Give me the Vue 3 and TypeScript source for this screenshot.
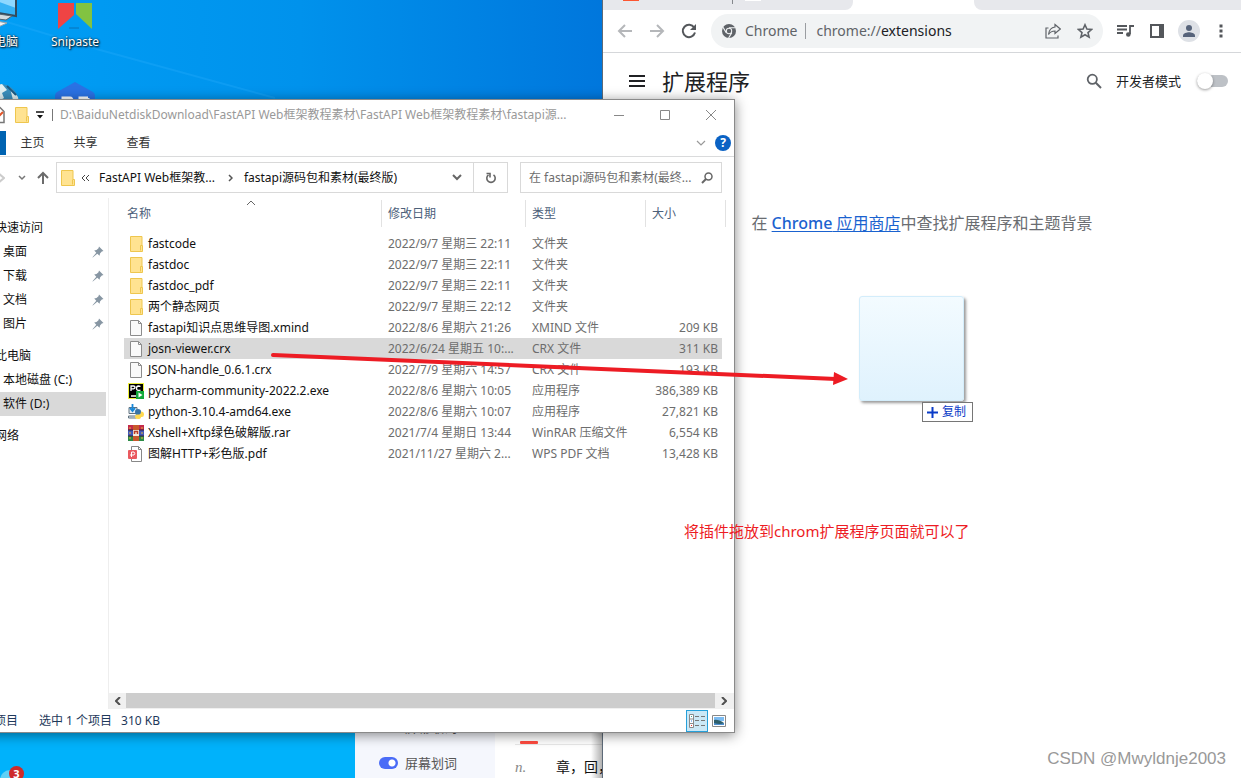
<script setup lang="ts">
import { ref } from 'vue'

type Kind = 'folder' | 'file' | 'pycharm' | 'python' | 'rar' | 'pdf'
interface Entry {
  name: string
  date: string
  type: string
  size: string
  kind: Kind
}

const entries: Entry[] = [
  { name: 'fastcode', date: '2022/9/7 星期三 22:11', type: '文件夹', size: '', kind: 'folder' },
  { name: 'fastdoc', date: '2022/9/7 星期三 22:11', type: '文件夹', size: '', kind: 'folder' },
  { name: 'fastdoc_pdf', date: '2022/9/7 星期三 22:11', type: '文件夹', size: '', kind: 'folder' },
  { name: '两个静态网页', date: '2022/9/7 星期三 22:12', type: '文件夹', size: '', kind: 'folder' },
  { name: 'fastapi知识点思维导图.xmind', date: '2022/8/6 星期六 21:26', type: 'XMIND 文件', size: '209 KB', kind: 'file' },
  { name: 'josn-viewer.crx', date: '2022/6/24 星期五 10:...', type: 'CRX 文件', size: '311 KB', kind: 'file' },
  { name: 'JSON-handle_0.6.1.crx', date: '2022/7/9 星期六 14:57', type: 'CRX 文件', size: '193 KB', kind: 'file' },
  { name: 'pycharm-community-2022.2.exe', date: '2022/8/6 星期六 10:05', type: '应用程序', size: '386,389 KB', kind: 'pycharm' },
  { name: 'python-3.10.4-amd64.exe', date: '2022/8/6 星期六 10:07', type: '应用程序', size: '27,821 KB', kind: 'python' },
  { name: 'Xshell+Xftp绿色破解版.rar', date: '2021/7/4 星期日 13:44', type: 'WinRAR 压缩文件', size: '6,554 KB', kind: 'rar' },
  { name: '图解HTTP+彩色版.pdf', date: '2021/11/27 星期六 2...', type: 'WPS PDF 文档', size: '13,428 KB', kind: 'pdf' },
]
const selected = ref('josn-viewer.crx')

interface NavItem { label: string; pinned?: boolean; active?: boolean }
interface NavGroup { title: string; items: NavItem[] }
const groups: NavGroup[] = [
  {
    title: '快速访问',
    items: [
      { label: '桌面', pinned: true },
      { label: '下载', pinned: true },
      { label: '文档', pinned: true },
      { label: '图片', pinned: true },
    ],
  },
  { title: '此电脑', items: [{ label: '本地磁盘 (C:)' }, { label: '软件 (D:)', active: true }] },
  { title: '网络', items: [] },
]
const tabs = ['主页', '共享', '查看']
const devMode = ref(false)
const wordPick = ref(true)
const filter = ref('')
</script>

<template>
  <main class="desktop">
    <svg class="wall" viewBox="0 0 603 100" preserveAspectRatio="none" aria-hidden="true">
      <path d="M0 20 L100 50 L275 98" fill="none" stroke="#35b4ff" stroke-opacity=".25" stroke-width="2" />
    </svg>
    <div class="icon pc">
      <svg width="64" height="32" viewBox="0 0 64 32" aria-hidden="true">
        <path d="M22 0 H62 V16 L22 9Z" fill="#35b3f5" />
        <path d="M40 0 L62 8 V0Z" fill="#8cd8ff" />
        <path d="M22 9 L62 16 V0" fill="none" stroke="#334a5c" stroke-width="2" />
        <path d="M38 13 L58 16 L52 20 L36 18Z" fill="#d5dce0" stroke="#56636b" />
        <path d="M26 18 L53 23 L42 28 L20 26Z" fill="#eef1f3" stroke="#9aa5ab" />
      </svg>
      <span>此电脑</span>
    </div>
    <div class="icon snip">
      <svg width="36" height="32" viewBox="0 0 36 32" aria-hidden="true">
        <path d="M1 3H17V15L1 29Z" fill="#ef4444" />
        <path d="M19 3H35V29L19 14Z" fill="#82c341" />
        <path d="M12 28h10" stroke="#0872b8" />
      </svg>
      <span>Snipaste</span>
    </div>
    <svg class="globe" width="40" height="40" viewBox="0 0 40 40" aria-hidden="true">
      <circle cx="20" cy="20" r="19" fill="#3b8fbd" />
      <path d="M9 4 L22 1 L27 7 L22 10 L24 15 L15 20 L10 12Z M30 5 L38 14 L39 22 L33 17Z" fill="#e3f2f4" />
      <path d="M27 3 L36 12" stroke="#1d5b83" stroke-width="2" />
    </svg>
    <svg class="hex" width="40" height="40" viewBox="0 0 40 40" aria-hidden="true">
      <path d="M20 0 L38 10 Q40 11 40 14 V40 H0 V14 Q0 11 2 10Z" fill="#2a72e4" />
      <path d="M8 24 V16 H15 Q17 16 17 19 V24 M33 16 H25 V18 M33 16 V19 L29 22" fill="none" stroke="#fff" stroke-width="3" />
    </svg>
    <div class="tray">
      <span class="bubble"></span><span class="count">3</span>
    </div>

    <section class="dict">
      <div class="dict-side">
        <div class="cut"><i></i>屏幕取词</div>
        <label class="pick"><input v-model="wordPick" type="checkbox" />屏幕划词</label>
      </div>
      <div class="dict-main">
        <div class="rule"><i></i></div>
        <p><em>n.</em><span>章，回，</span></p>
      </div>
    </section>

    <section class="chrome">
      <div class="strip">
        <div class="inactive"><i class="fav"></i><i class="sep"></i><i class="fav2"></i></div>
        <div class="current"></div>
        <div class="rest"></div>
      </div>
      <div class="toolbar">
        <button class="tool" aria-label="后退"><svg width="16" height="16" viewBox="0 0 16 16"><path d="M15 8H2M8 2L2 8l6 6" fill="none" stroke="#b5b7ba" stroke-width="2" /></svg></button>
        <button class="tool" aria-label="前进"><svg width="16" height="16" viewBox="0 0 16 16"><path d="M1 8h13M8 2l6 6-6 6" fill="none" stroke="#b5b7ba" stroke-width="2" /></svg></button>
        <button class="tool" aria-label="重新加载"><svg width="16" height="16" viewBox="0 0 16 16"><path d="M13.200 4.500A6.200 6.200 0 1 0 14 9.600" fill="none" stroke="#54575b" stroke-width="2" /><path d="M15 1v6H9Z" fill="#54575b" /></svg></button>
        <div class="omni">
          <svg width="14" height="14" viewBox="0 0 14 14" aria-hidden="true"><circle cx="7" cy="7" r="7" fill="#5f6368" /><circle cx="7" cy="7" r="3.200" fill="#f1f3f4" /><circle cx="7" cy="7" r="2.200" fill="#5f6368" /><path d="M7 3.800H13.500M4.200 8.600L1 3.200M9.800 8.600L6.600 14" stroke="#f1f3f4" stroke-width="1.100" /></svg>
          <span class="site">Chrome</span><i></i>
          <span class="url">chrome://<b>extensions</b></span>
          <button class="tool" aria-label="分享"><svg width="16" height="16" viewBox="0 0 16 16"><path d="M3.500 5H1v10h12v-2.500" fill="none" stroke="#5f6368" stroke-width="1.200" /><path d="M10 1.500L15.300 6L10 10.500V8C7 8 5 9 3.500 11.500C4 7 6.500 4.500 10 4Z" fill="none" stroke="#5f6368" stroke-width="1.200" /></svg></button>
          <button class="tool" aria-label="收藏"><svg width="16" height="16" viewBox="0 0 16 16"><path d="M8 1.800l1.900 4.300 4.600.4-3.500 3.100 1.100 4.600L8 11.800l-4.100 2.400L5 9.600 1.500 6.500l4.600-.4Z" fill="none" stroke="#5f6368" stroke-width="1.600" /></svg></button>
        </div>
        <button class="tool" aria-label="媒体"><svg width="18" height="16" viewBox="0 0 18 16"><path d="M1 3h10M1 6.500h10M1 10h6M14 11V3h4" fill="none" stroke="#54575b" stroke-width="1.800" /><circle cx="12.300" cy="11.500" r="2.300" fill="#54575b" /></svg></button>
        <button class="tool" aria-label="侧边栏"><svg width="14" height="14" viewBox="0 0 14 14"><path d="M1 1h12v12H1Z" fill="#fff" stroke="#54575b" stroke-width="2" /><path d="M9 1h4v12H9Z" fill="#54575b" /></svg></button>
        <button class="tool" aria-label="个人资料"><svg width="22" height="22" viewBox="0 0 22 22"><circle cx="11" cy="11" r="11" fill="#dee1e6" /><circle cx="11" cy="8" r="3" fill="#56637a" /><path d="M5 17v-1.500C5 13 9 12.200 11 12.200S17 13 17 15.500V17Z" fill="#56637a" /></svg></button>
        <button class="tool" aria-label="更多"><svg width="4" height="14" viewBox="0 0 4 14"><path d="M.5.500h3v3h-3ZM.5 5.500h3v3h-3ZM.5 10.500h3v3h-3Z" fill="#54575b" /></svg></button>
      </div>
      <header class="ext-head">
        <button class="tool" aria-label="主菜单"><svg width="16" height="12" viewBox="0 0 16 12"><path d="M0 1h16M0 6h16M0 11h16" stroke="#202124" stroke-width="2" /></svg></button>
        <h1>扩展程序</h1>
        <button class="tool" aria-label="搜索"><svg width="16" height="16" viewBox="0 0 16 16"><circle cx="6.300" cy="6.300" r="4.600" fill="none" stroke="#5f6368" stroke-width="1.800" /><path d="M9.800 9.800L15 15" stroke="#5f6368" stroke-width="2" /></svg></button>
        <label class="dev">开发者模式<input v-model="devMode" type="checkbox" /></label>
      </header>
      <p class="store">在 <a href="#"><b>Chrome</b> 应用商店</a>中查找扩展程序和主题背景</p>
    </section>

    <section class="explorer">
      <header class="title">
        <svg class="doc" width="14" height="18" viewBox="0 0 14 18" aria-hidden="true"><path d="M1 1.500h8l4 4V16.500H1Z" fill="#fff" stroke="#777" stroke-width="1.500" /><path d="M3 9l3 3 6-6" fill="none" stroke="#e2562b" stroke-width="2" /></svg>
        <svg width="14" height="16" viewBox="0 0 14 16" aria-hidden="true"><path d="M.5.500h11.500v9h1.500v6H.5Z" fill="#ffe391" stroke="#eec64e" /><path d="M11.500 9.500v5" stroke="#eec64e" /></svg>
        <svg class="drop" width="8" height="8" viewBox="0 0 8 8" aria-hidden="true"><path d="M0 1h8" stroke="#111" stroke-width="1.500" /><path d="M1 4h6L4 7.500Z" fill="#111" /></svg>
        <i></i>
        <h2>D:\BaiduNetdiskDownload\FastAPI Web框架教程素材\FastAPI Web框架教程素材\fastapi源...</h2>
        <button aria-label="最小化"><svg width="12" height="12" viewBox="0 0 12 12"><path d="M1 6.500h10" stroke="#888" /></svg></button>
        <button aria-label="最大化"><svg width="12" height="12" viewBox="0 0 12 12"><path d="M1.500 1.500h9v9h-9Z" fill="none" stroke="#888" /></svg></button>
        <button aria-label="关闭"><svg width="12" height="12" viewBox="0 0 12 12"><path d="M1 1l10 10M11 1L1 11" stroke="#888" /></svg></button>
      </header>
      <nav class="ribbon">
        <button class="file" aria-label="文件"></button>
        <button v-for="t in tabs" :key="t">{{ t }}</button>
        <span class="grow"></span>
        <svg width="10" height="6" viewBox="0 0 10 6" aria-hidden="true"><path d="M1 1l4 4 4-4" fill="none" stroke="#999" stroke-width="1.200" /></svg>
        <button class="help" aria-label="帮助">?</button>
      </nav>
      <div class="address">
        <svg class="fwd" width="8" height="12" viewBox="0 0 8 12" aria-hidden="true"><path d="M1 1l6 5-6 5" fill="none" stroke="#ccc" stroke-width="2" /></svg>
        <svg class="hist" width="8" height="6" viewBox="0 0 8 6" aria-hidden="true"><path d="M1 1l3 3 3-3" fill="none" stroke="#777" stroke-width="1.500" /></svg>
        <svg class="up" width="12" height="14" viewBox="0 0 12 14" aria-hidden="true"><path d="M6 13V2M1 7l5-5 5 5" fill="none" stroke="#6b6b6b" stroke-width="2" /></svg>
        <div class="path">
          <svg width="14" height="16" viewBox="0 0 14 16" aria-hidden="true"><path d="M.5.500h11.500v9h1.500v6H.5Z" fill="#ffe391" stroke="#eec64e" /><path d="M11.500 9.500v5" stroke="#eec64e" /></svg>
          <svg class="more" width="9" height="8" viewBox="0 0 9 8" aria-hidden="true"><path d="M4 1L1 4l3 3M8 1L5 4l3 3" fill="none" stroke="#444" /></svg>
          <button>FastAPI Web框架教...</button>
          <svg class="next" width="5" height="8" viewBox="0 0 5 8" aria-hidden="true"><path d="M1 1l3 3-3 3" fill="none" stroke="#555" stroke-width="1.500" /></svg>
          <button>fastapi源码包和素材(最终版)</button>
          <span class="grow"></span>
          <svg width="10" height="7" viewBox="0 0 10 7" aria-hidden="true"><path d="M1 1l4 4 4-4" fill="none" stroke="#666" stroke-width="2" /></svg>
          <button class="refresh" aria-label="刷新"><svg width="12" height="12" viewBox="0 0 12 12"><path d="M8.500 2.800A4.200 4.200 0 1 1 3.500 2.800" fill="none" stroke="#666" stroke-width="1.600" /><path d="M1.500 1.500H5V5.500" fill="none" stroke="#666" stroke-width="1.600" /></svg></button>
        </div>
        <div class="search">
          <input v-model="filter" type="text" aria-label="搜索" placeholder="在 fastapi源码包和素材(最终..." />
          <svg width="12" height="12" viewBox="0 0 12 12" aria-hidden="true"><circle cx="7.500" cy="4.500" r="3.500" fill="none" stroke="#666" stroke-width="1.500" /><path d="M5 7L1 11" stroke="#666" stroke-width="2" /></svg>
        </div>
      </div>
      <div class="body">
        <aside>
          <div v-for="g in groups" :key="g.title" class="group">
            <div class="nav head">{{ g.title }}</div>
            <div v-for="n in g.items" :key="n.label" class="nav" :class="{ active: n.active }">
              <span>{{ n.label }}</span>
              <svg v-if="n.pinned" width="12" height="12" viewBox="0 0 12 12" aria-hidden="true"><path d="M7 .5L11.500 5L9.800 5.500L8 7.500L7.600 9.800L5.300 7.700L.8 11.500L.5 11.200L4.300 6.700L2.200 4.400L4.500 4L6.500 2.200Z" fill="#8796a3" /></svg>
            </div>
          </div>
        </aside>
        <div class="list">
          <table>
            <colgroup><col class="c1" /><col class="c2" /><col class="c3" /><col class="c4" /></colgroup>
            <thead>
              <tr>
                <th>名称<svg width="10" height="6" viewBox="0 0 10 6" aria-hidden="true"><path d="M1 5l4-4 4 4" fill="none" stroke="#666" /></svg></th>
                <th>修改日期</th><th>类型</th><th>大小</th>
              </tr>
            </thead>
            <tbody>
              <tr v-for="e in entries" :key="e.name" :class="{ sel: e.name === selected }" @click="selected = e.name">
                <td>
                  <div class="name">
                    <svg width="16" height="16" viewBox="0 0 16 16" aria-hidden="true">
                      <template v-if="e.kind === 'folder'"><path d="M2.500.500H14v9h.5v6h-12Z" fill="#ffe391" stroke="#eec64e" /><path d="M12.500 14.500v-5H14" fill="none" stroke="#eec64e" /></template>
                      <template v-else-if="e.kind === 'file'"><path d="M2.500.500h8l3 3v12h-11Z" fill="#fafafa" stroke="#8c8c8c" /><path d="M10.500.500v3h3" fill="none" stroke="#8c8c8c" /></template>
                      <template v-else-if="e.kind === 'pycharm'"><path d="M0 0h16v16H0Z" fill="#eef03a" /><path d="M1 1h14v14H1Z" fill="#000" /><path d="M3 8V3h2.500q1.500 0 1.500 1.300T5.500 5.800H3M12.500 3.500Q11.500 3 10.500 3 8.500 3.200 8.500 5.300T10.500 7.500q1 0 2-.5M3 13h5" fill="none" stroke="#fff" stroke-width="1.300" /><path d="M8 8h8v8H8Z" fill="#13a93b" /><path d="M10.500 9.500v5l4-2.500Z" fill="#fff" /></template>
                      <template v-else-if="e.kind === 'python'"><path d="M1 3.500h8v6H1ZM.5 12h8v2h-8Z" fill="#e4edf3" stroke="#60727f" /><path d="M4.500 0v6M2 4l2.500 3L7 4" fill="none" stroke="#1687d9" stroke-width="1.800" /><path d="M7 7.500Q7 5 10 5t3 2.500V9q0 2-2 2H9q-2 0-2-3.500Z" fill="#3a75a8" /><path d="M13 7.500q3 0 3 3t-3 2.500q0 2-3 2t-3-2.500Q7 10.500 9 10.500h2.500Q13 10 13 7.500Z" fill="#ffd94f" /></template>
                      <template v-else-if="e.kind === 'rar'"><path d="M0 0h16v5H0Z" fill="#c32a4a" /><path d="M0 5h16v6H0Z" fill="#4257b5" /><path d="M0 11h16v5H0Z" fill="#2d8b46" /><path d="M0 5h16M0 11h16" stroke="#33203a" /><path d="M5 0h6v16H5Z" fill="#c8582c" /><path d="M5 5h6v6H5Z" fill="#f4ead8" /><path d="M6.500 9V6.500h3V9" fill="none" stroke="#bb3d26" stroke-width="1.500" /><path d="M2 2v12M14 2v12" stroke="#e8b83d" stroke-dasharray="2 3" /></template>
                      <template v-else><path d="M3.500.500h7l3 3v12h-10Z" fill="#fff" stroke="#888" /><path d="M10.500.500v3h3" fill="none" stroke="#888" /><rect y="4" width="9" height="9" rx="1" fill="#ea5a5f" /><path d="M3.500 11V6H6q1.500 1.500 0 3H2" fill="none" stroke="#fff" /></template>
                    </svg>
                    <span>{{ e.name }}</span>
                  </div>
                </td>
                <td>{{ e.date }}</td><td>{{ e.type }}</td><td>{{ e.size }}</td>
              </tr>
            </tbody>
          </table>
          <div class="hscroll">
            <button aria-label="向左滚动"><svg width="6" height="8" viewBox="0 0 6 8"><path d="M5 0L1 4l4 4" fill="none" stroke="#505050" stroke-width="2" /></svg></button>
            <div class="thumb"></div>
            <button aria-label="向右滚动"><svg width="6" height="8" viewBox="0 0 6 8"><path d="M1 0l4 4-4 4" fill="none" stroke="#505050" stroke-width="2" /></svg></button>
          </div>
        </div>
      </div>
      <footer>
        <span class="total">11 个项目</span>
        <span class="chosen">选中 1 个项目</span><span class="bytes">310 KB</span>
        <span class="grow"></span>
        <button class="view on" aria-label="详细信息"><svg width="16" height="14" viewBox="0 0 16 14"><path d="M.5.500h4v13h-4ZM.5 5h4M.5 9.500h4" fill="#fff" stroke="#8a8a8a" /><path d="M6 2.500h4M12 2.500h4M6 6.500h4M12 6.500h4M6 11.500h4M12 11.500h4" stroke="#777" /><path d="M2 2.500h1" stroke="#3a9" /><path d="M2 7h1" stroke="#38e" /><path d="M2 11.500h1" stroke="#e33" /></svg></button>
        <button class="view" aria-label="大图标"><svg width="14" height="12" viewBox="0 0 14 12"><path d="M.5.500h13v11H.5Z" fill="#fff" stroke="#888" /><path d="M2 2h10v4H2Z" fill="#7cbcf2" /><path d="M2 5q4-1 10 3v2H2Z" fill="#2e5f6b" /><path d="M2 8q6 2 10 0v2H2Z" fill="#4e8fd0" /></svg></button>
      </footer>
    </section>

    <div class="ghost"></div>
    <div class="tip"><svg width="11" height="11" viewBox="0 0 11 11" aria-hidden="true"><path d="M5.500 0v11M0 5.500h11" stroke="#0a3cc8" stroke-width="2" /></svg>复制</div>
    <svg class="arrow" width="580" height="36" viewBox="0 0 580 36" aria-hidden="true">
      <path d="M2 5L565 29" stroke="#ed1c24" stroke-width="4" stroke-linecap="round" />
      <path d="M563 22L577 29L562 35Z" fill="#ed1c24" />
    </svg>
    <p class="note">将插件拖放到chrom扩展程序页面就可以了</p>
    <p class="mark">CSDN @Mwyldnje2003</p>
  </main>
</template>

<style>
body { margin: 0; overflow: hidden; }
</style>

<style scoped>
* { box-sizing: border-box; }
p, h1, h2 { margin: 0; font-weight: 400; }
button { border: 0; padding: 0; background: none; font: inherit; color: inherit; display: flex; align-items: center; justify-content: center; flex-shrink: 0; white-space: nowrap; }
svg { flex-shrink: 0; }
.grow { flex: 1; }
.desktop { position: relative; height: 100vh; overflow: hidden; background: linear-gradient(to bottom, transparent 0, transparent 100px, #00b2fb 700px), linear-gradient(to right, #009ef5 0, #0092ec 300px, #0076dc 610px); font: 12px/16px "Noto Sans", "Noto Sans CJK SC", sans-serif; color: #111; }
.wall { position: absolute; left: 0; top: 0; width: 603px; height: 100px; }
.icon { position: absolute; top: 0; display: flex; flex-direction: column; align-items: center; gap: 2px; color: #fff; text-shadow: 1px 1px 2px #000, 0 0 2px #023; white-space: nowrap; }
.pc { left: -42px; width: 64px; align-items: flex-end; padding-right: 4px; }
.snip { left: 45px; width: 60px; }
.globe { position: absolute; left: -20px; top: 83px; }
.hex { position: absolute; left: 55px; top: 82px; }
.tray { position: absolute; left: 0; bottom: -4px; display: flex; align-items: flex-end; }
.bubble { width: 16px; height: 12px; border-radius: 10px 4px 0 0; background: #5fd0f5; }
.count { width: 15px; height: 15px; margin-left: -7px; margin-bottom: 1px; border-radius: 8px; background: #cf2a2a; color: #fff; font-weight: 700; font-size: 11px; line-height: 15px; text-align: center; }

.dict { position: absolute; left: 355px; bottom: 0; width: 248px; height: 62px; display: flex; background: #fff; }
.dict::after { content: ""; position: absolute; inset: 0 0 0 auto; width: 12px; background: linear-gradient(to right, transparent, #0005); }
.dict-side { width: 140px; padding: 2px 0 0 24px; background: #f5f7fd; color: #555; font-size: 13px; display: flex; flex-direction: column; gap: 18px; line-height: 18px; }
.cut { display: flex; align-items: center; gap: 7px; }
.cut i { width: 19px; height: 12px; border-radius: 6px; background: #b9bdc8; }
.pick { display: flex; align-items: center; gap: 7px; }
.pick input { appearance: none; margin: 0; width: 19px; height: 12px; border-radius: 6px; background: radial-gradient(circle at 13px 6px, #fff 3px, #4a6cf7 4px); }
.dict-main { flex: 1; min-width: 0; padding: 25px 0 0 20px; overflow: hidden; }
.rule { border-bottom: 1px solid #e8e8e8; height: 4px; }
.rule i { display: block; width: 18px; height: 3px; margin-left: 5px; border-radius: 1px; background: #ff4a3f; }
.dict-main p { display: flex; margin-top: 12px; font-size: 14px; line-height: 20px; white-space: nowrap; }
.dict-main em { width: 41px; flex-shrink: 0; color: #888; font-family: "Liberation Serif", serif; font-size: 15px; }

.chrome { position: absolute; inset: 0 0 0 602px; background: #fff; border-left: 1px solid #5d6a78; font-size: 14px; }
.strip { display: flex; height: 10px; background: #fff; }
.inactive { width: 250px; display: flex; background: #e7e8ec; border-radius: 0 0 8px 0; }
.fav { width: 16px; height: 1px; margin-left: 20px; background: #fc5531; }
.sep { width: 1px; height: 4px; margin-left: 93px; background: #85888c; }
.fav2 { width: 16px; height: 1px; margin-left: 12px; background: #fff; }
.current { width: 121px; }
.rest { flex: 1; background: #e7e8ec; border-radius: 0 0 0 8px; }
.toolbar { display: flex; align-items: center; height: 43px; padding: 0 4px 0 6px; border-bottom: 1px solid #d5d7da; }
.tool { width: 32px; height: 32px; }
.omni { flex: 1; display: flex; align-items: center; height: 34px; margin: 0 6px; padding: 0 2px 0 11px; border-radius: 17px; background: #f1f3f4; color: #5f6368; }
.omni i { width: 1px; height: 16px; margin: 0 10px 0 8px; background: #9a9da1; }
.site { margin-left: 9px; }
.url { flex: 1; }
.url b { font-weight: 400; color: #202124; }
.ext-head { display: flex; align-items: center; height: 56px; padding: 0 13px 0 18px; }
.ext-head h1 { flex: 1; margin-left: 9px; font-size: 22px; line-height: 30px; color: #202124; }
.dev { display: flex; align-items: center; gap: 16px; margin-left: 6px; font-size: 13px; color: #202124; }
.dev input { appearance: none; position: relative; margin: 0; width: 31px; height: 12px; border-radius: 6px; background: #bdc1c6; }
.dev input::before { content: ""; position: absolute; left: 0; top: -2px; width: 16px; height: 16px; border-radius: 8px; background: #fff; box-shadow: 0 1px 3px #0006; }
.store { margin-top: 102px; text-align: center; font-size: 16px; line-height: 24px; color: #6a6d71; }
.store a { color: #1a62cf; text-underline-offset: 2px; }
.store b { font-weight: 500; }

.explorer { position: absolute; left: -40px; top: 99px; bottom: 45px; width: 775px; display: flex; flex-direction: column; background: #fff; border: 1px solid #8a8a8a; box-shadow: 0 2px 12px #0007; white-space: nowrap; }
.title { display: flex; align-items: center; height: 30px; padding-left: 30px; color: #999; }
.title .doc { margin-right: 10px; }
.title .drop { margin-left: 7px; }
.title i { width: 1px; height: 12px; margin: 0 7px 0 8px; background: #777; }
.title h2 { flex: 1; font-size: 12px; }
.title button { width: 46px; height: 30px; }
.ribbon { display: flex; align-items: center; height: 27px; padding-right: 3px; border-bottom: 1px solid #dadbdc; color: #333; }
.ribbon button { width: 53px; height: 24px; }
.ribbon .file { width: 45px; background: #0063b1; }
.ribbon .help { width: 16px; height: 16px; margin-left: 9px; border-radius: 8px; background: #0a62c4; color: #fff; font-weight: 700; }
.address { display: flex; align-items: center; height: 41px; padding: 0 12px 0 36px; color: #111; }
.hist { margin: 0 11px 0 13px; }
.path { display: flex; align-items: center; width: 452px; height: 31px; flex-shrink: 0; margin-left: 7px; padding-left: 4px; border: 1px solid #d9d9d9; }
.more { margin: 0 9px 0 6px; }
.next { margin: 0 11px 0 13px; }
.refresh { width: 34px; height: 29px; margin-left: 11px; border-left: 1px solid #d9d9d9; }
.search { flex: 1; min-width: 0; display: flex; align-items: center; height: 31px; margin-left: 12px; padding: 0 8px; border: 1px solid #d9d9d9; }
.search input { flex: 1; min-width: 0; border: 0; outline: 0; padding: 0; background: none; font: inherit; }
.search input::placeholder { color: #6d6d6d; opacity: 1; }
.body { flex: 1; display: flex; min-height: 0; }
aside { width: 148px; padding: 18px 2px 0 0; border-right: 1px solid #eee; }
.group { margin-bottom: 8px; }
.nav { display: flex; align-items: center; justify-content: space-between; height: 24px; padding: 0 2px 0 42px; }
.nav.head { padding-left: 34px; }
.nav.active { background: #d9d9d9; }
.list { flex: 1; display: flex; flex-direction: column; justify-content: space-between; padding-top: 2px; }
table { width: 598px; margin-left: 15px; table-layout: fixed; border-collapse: separate; border-spacing: 0; color: #6d6d6d; }
.c1 { width: 258px; } .c2 { width: 144px; } .c3 { width: 120px; } .c4 { width: 76px; }
th { position: relative; height: 27px; padding: 0 0 0 6px; text-align: left; font-weight: 400; color: #4c607a; }
th:first-child { padding-left: 3px; }
th::after { content: ""; position: absolute; right: 0; top: 0; width: 1px; height: 27px; background: #e2e2e2; }
th:last-child::after { right: -4px; }
th svg { position: absolute; left: 122px; top: 0; }
tbody::before { content: ""; display: block; height: 6px; }
td { height: 21px; padding: 0 0 0 6px; line-height: 16px; overflow: hidden; }
td:first-child { padding-left: 4px; color: #111; }
td:last-child { padding: 0 4px 0 0; text-align: right; }
.sel td { background: #d9d9d9; }
.name { display: flex; align-items: center; gap: 4px; }
.hscroll { display: flex; height: 16px; padding: 0 2px 0 0; background: #f0f0f0; }
.hscroll button { width: 17px; height: 15px; }
.thumb { flex: 1; height: 15px; background: #cdcdcd; }
footer { display: flex; align-items: center; height: 23px; padding-right: 4px; color: #1e395b; }
.total { width: 57px; text-align: right; }
.chosen { margin-left: 21px; }
.bytes { margin-left: 9px; }
.view { width: 22px; height: 22px; }
.view.on { border: 1px solid #26a0da; background: #cbe8f6; }

.ghost { position: absolute; left: 859px; top: 296px; width: 105px; height: 105px; border: 1px solid #d3edfb; border-radius: 3px; background: linear-gradient(#f3fbff, #dff2fd); box-shadow: 2px 2px 3px #0006; }
.tip { position: absolute; left: 922px; top: 402px; width: 51px; height: 20px; display: flex; align-items: center; gap: 4px; padding-left: 4px; border: 1px solid #767676; background: #fff; color: #0a3cc8; }
.arrow { position: absolute; left: 271px; top: 350px; pointer-events: none; }
.note { position: absolute; left: 684px; top: 521px; font-size: 15px; line-height: 20px; color: #ed1c24; white-space: nowrap; }
.mark { position: absolute; right: 15px; bottom: 7px; font: 17px/24px "Liberation Sans", sans-serif; color: #999; white-space: nowrap; }
</style>
